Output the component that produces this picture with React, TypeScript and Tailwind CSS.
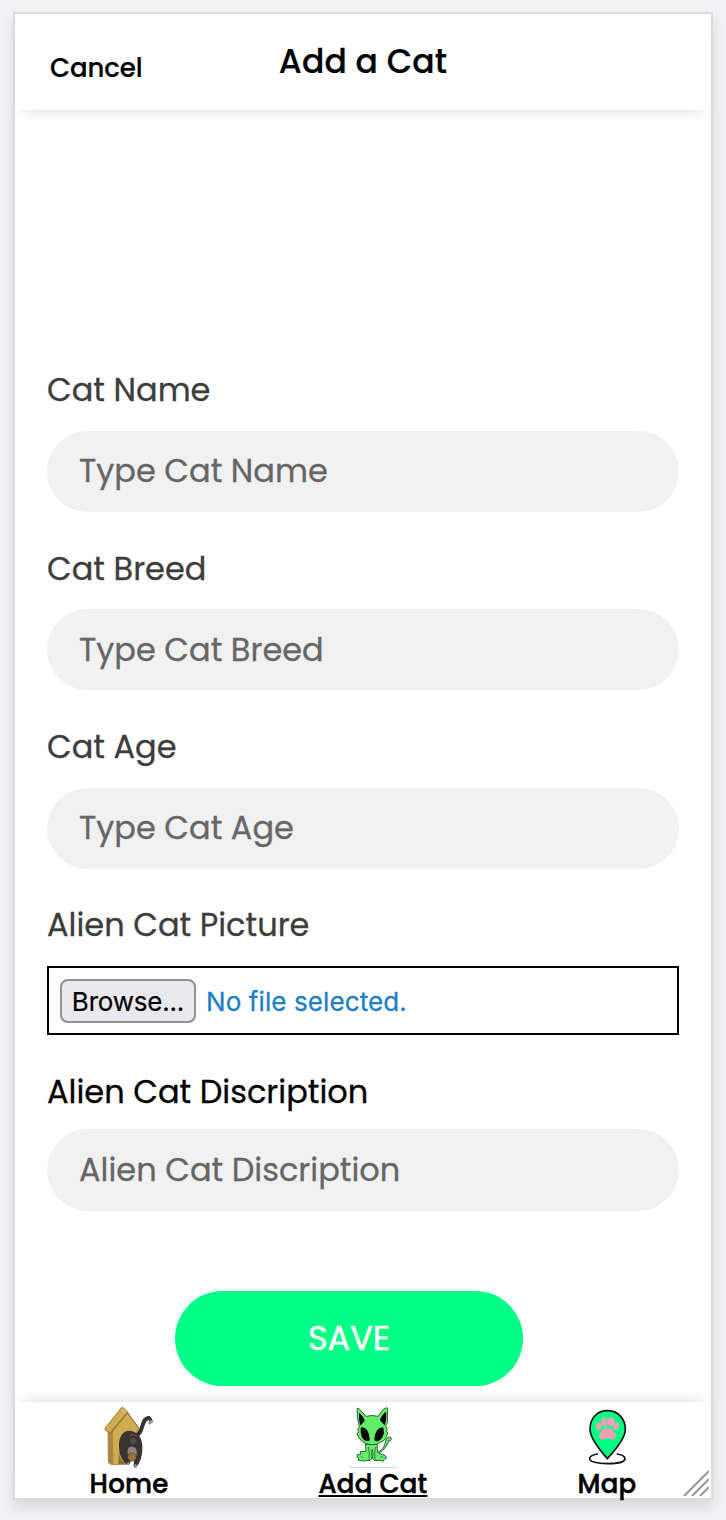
import React from "react";

function HouseIcon() {
  return (
    <svg className="h-16 w-[52px] shrink-0" viewBox="39 28 156 192" aria-hidden="true">
      <path d="M54 106 L55 200 Q58 206 67 207 L118 206 L136 150 L146 97 L112 50 L99 44 Z" fill="#cfac50" stroke="#8d6a35" strokeWidth="2" />
      <path d="M55 106 L69 103 L70 206 L57 202 Z" fill="#a98545" />
      <path d="M46 104 L45 98 L94 36 L101 37 L114 50 L63 112 Z" fill="#cfac50" stroke="#8d6a35" strokeWidth="2.5" strokeLinejoin="round" />
      <path d="M62 109 L112 51 L146 96" fill="none" stroke="#8d6a35" strokeWidth="3" />
      <path d="M97 40 L108 51" stroke="#dfbf72" strokeWidth="5" />
      <path d="M87 168 Q87 199 115 204 L85 205 Z" fill="#8b6a2f" />
      <path d="M137 120 C163 112 151 68 177 67" fill="none" stroke="#393535" strokeWidth="12" strokeLinecap="round" />
      <path d="M172 67 Q184 67 183 81" fill="none" stroke="#393535" strokeWidth="10" />
      <path d="M179 82 L184 77" fill="none" stroke="#9a9292" strokeWidth="8" strokeLinecap="round" />
      <path d="M119 105 C96 105 86 126 87 154 C88 182 98 198 112 205 L119 206 L123 191 L132 192 L131 213 L138 216 C151 201 158 180 157 149 C155 121 140 107 119 105Z" fill="#393333" />
      <path d="M113 174 C111 156 120 151 128 153 C138 153 142 164 140 179 L132 186Z" fill="#8d8585" />
      <circle cx="126" cy="184" r="12.5" fill="#987331" stroke="#49402d" strokeWidth="1.5" />
      <circle cx="129" cy="136" r="7" fill="#383434" stroke="#777" strokeWidth="2" />
      <circle cx="129" cy="136" r="2" fill="#999" />
      <path d="M119 119 Q129 114 142 121" fill="none" stroke="#6d6868" strokeWidth="2" />
      <path d="M113 201 L117 205 M135 207 L139 213" stroke="#aaa" strokeWidth="6" />
    </svg>
  );
}

function AlienCatIcon() {
  return (
    <svg className="h-16 w-[52px] shrink-0" viewBox="111 29 156 192" aria-hidden="true">
      <g fill="#62ef68" stroke="#273d2a" strokeWidth="2.5" strokeLinejoin="round">
        <path d="M205 170 C221 160 225 148 227 137 C228 127 240 121 244 129 C246 134 240 138 236 136 C233 150 223 163 208 172Z" />
        <path d="M166 147 L168 168 L151 169 L153 176 L142 178 Q139 187 146 189 L145 195 L160 197 L181 195 L187 187 L193 196 L210 195 L219 198 L223 191 L229 189 Q229 179 215 177 L203 171 L201 146Z" />
        <path d="M141 40 Q145 36 150 43 L168 63 Q187 58 204 63 L220 42 Q230 35 233 38 L232 82 L227 91 L232 103 L229 107 L233 113 Q228 135 212 141 Q188 155 162 142 Q147 133 141 116 L146 109 L142 102 L148 95 Q140 66 141 40Z" />
      </g>
      <path d="M147 52 Q161 63 164 76 L151 91 Q145 71 147 52Z M228 49 Q211 63 210 75 L224 90 Q231 72 228 49Z" fill="#050805" />
      <path d="M154 96 C168 94 180 112 179 136 C159 142 151 122 152 99Z M220 97 C204 94 194 111 193 135 C203 143 218 132 222 112Z" fill="#050805" />
      <path d="M176 155 Q179 174 177 193 M196 155 Q193 173 195 193 M186 162 Q182 180 187 188 Q191 177 187 162 M154 182 L159 188 M218 182 L212 188" fill="none" stroke="#273d2a" strokeWidth="2" />
      <path d="M117 217 H261" stroke="#d4d4d4" strokeWidth="3" />
    </svg>
  );
}

function MapPinIcon() {
  return (
    <svg className="h-16 w-10 shrink-0" viewBox="51 45 120 192" aria-hidden="true">
      <path d="M84 192 C67 194 59 200 59 206 C59 215 82 221 112 221 C143 221 165 215 165 206 C165 199 157 194 140 192" fill="none" stroke="#111" strokeWidth="5" />
      <path d="M112 206 C97 189 60 148 60 118 C60 84 82 62 112 62 C143 62 166 85 166 118 C166 148 128 189 112 206Z" fill="#00ff85" stroke="#111" strokeWidth="5" />
      <g fill="#f99fb5">
        <ellipse cx="103" cy="95" rx="9.5" ry="14" />
        <ellipse cx="123" cy="95" rx="9.5" ry="14" />
        <ellipse cx="86" cy="109" rx="8" ry="12" transform="rotate(-15 86 109)" />
        <ellipse cx="139" cy="108" rx="8" ry="12" transform="rotate(15 139 108)" />
        <path d="M112 112 C123 112 128 121 132 126 C145 137 135 151 123 147 Q112 143 102 147 C89 151 81 139 93 127 C97 123 101 112 112 112Z" />
      </g>
    </svg>
  );
}

function Field({ label, placeholder }: { label: string; placeholder: string }) {
  return (
    <label className="mb-8 block h-[146.33px] shrink-0">
      <span className="block h-[66px] pt-[1.4px] text-[32px] leading-[48px] whitespace-nowrap text-[#3d3d3d] [-webkit-text-stroke:0.3px_#3d3d3d]">{label}</span>
      <input placeholder={placeholder} className="block h-[81px] w-full rounded-full bg-[#f1f1f1] px-8 pb-[0.4px] text-[32px] outline-none [-webkit-text-stroke:0.3px_#666] placeholder:text-[#666]" />
    </label>
  );
}

export default function App() {
  return (
    <div className="h-[1520px] w-[726px] overflow-hidden bg-[#f2f2f4] pt-3 pl-[13px] font-['Poppins','Inter',sans-serif]">
      <div className="relative flex h-[1488px] w-[700px] flex-col border-2 border-[#dbdbdd] bg-white shadow-[0_8px_12px_rgba(0,0,0,0.1)]">
        <header className="grid h-24 shrink-0 grid-cols-[1fr_auto_1fr] bg-white shadow-[0_9px_12px_-8px_rgba(0,0,0,0.14)]">
          <button className="mt-[34px] ml-[35px] h-10 justify-self-start text-[26px] leading-10 font-medium tracking-[-0.1px] [-webkit-text-stroke:0.2px_black]">Cancel</button>
          <h1 className="mt-6 h-12 text-[33px] leading-[48px] font-medium tracking-[0.1px] whitespace-nowrap [-webkit-text-stroke:0.2px_black]">Add a Cat</h1>
        </header>
        <main className="flex min-h-0 flex-1 flex-col px-8 pt-[255px]">
          <Field label="Cat Name" placeholder="Type Cat Name" />
          <Field label="Cat Breed" placeholder="Type Cat Breed" />
          <Field label="Cat Age" placeholder="Type Cat Age" />
          <div className="h-[66px] shrink-0 pt-px text-[32px] leading-[48px] text-[#3d3d3d] [-webkit-text-stroke:0.3px_#3d3d3d]">Alien Cat Picture</div>
          <div className="flex h-[69px] shrink-0 items-center gap-[10px] border-2 border-black px-[11px] pt-0.5 font-['Inter',sans-serif] text-[26px] whitespace-nowrap">
            <button className="h-11 w-[136px] shrink-0 rounded-lg border-2 border-[#8f8f9d] bg-[#e9e9ed] leading-[42px] tracking-[-0.2px] [-webkit-text-stroke:0.2px_black]">Browse...</button>
            <span className="tracking-[0.1px] text-[#1c7fc4] [-webkit-text-stroke:0.3px_#1c7fc4]">No file selected.</span>
          </div>
          <label className="mt-8 block shrink-0">
            <span className="block h-[62px] pt-px text-[32px] leading-[48px] [-webkit-text-stroke:0.3px_black]">Alien Cat Discription</span>
            <input placeholder="Alien Cat Discription" className="block h-[82px] w-full rounded-full bg-[#f1f1f1] px-8 text-[32px] outline-none [-webkit-text-stroke:0.3px_#666] placeholder:text-[#666]" />
          </label>
          <button className="mt-20 ml-32 h-[95px] w-[348px] shrink-0 rounded-full bg-[#00ff85] pt-0.5 text-[33.5px] text-white [-webkit-text-stroke:0.5px_white]">SAVE</button>
        </main>
        <nav className="flex h-24 shrink-0 justify-between bg-white px-[75px] pt-[3px] text-[26px] leading-[31px] font-medium tracking-[0.2px] whitespace-nowrap shadow-[0_-9px_12px_-8px_rgba(0,0,0,0.14)] [-webkit-text-stroke:0.5px_black]">
          <a className="flex w-[78px] flex-col items-center"><HouseIcon /><span>Home</span></a>
          <a className="flex w-[110px] flex-col items-center"><AlienCatIcon /><span className="underline decoration-2 underline-offset-2">Add Cat</span></a>
          <a className="flex w-[58px] flex-col items-center"><MapPinIcon /><span>Map</span></a>
        </nav>
        <svg className="absolute right-0.5 bottom-0.5 h-[26px] w-[26px]" viewBox="0 0 26 26" fill="none" stroke="#999" strokeWidth="2.2">
          <path d="M1 26 L26 1 M9 26 L26 9 M17 26 L26 17" />
        </svg>
      </div>
    </div>
  );
}
